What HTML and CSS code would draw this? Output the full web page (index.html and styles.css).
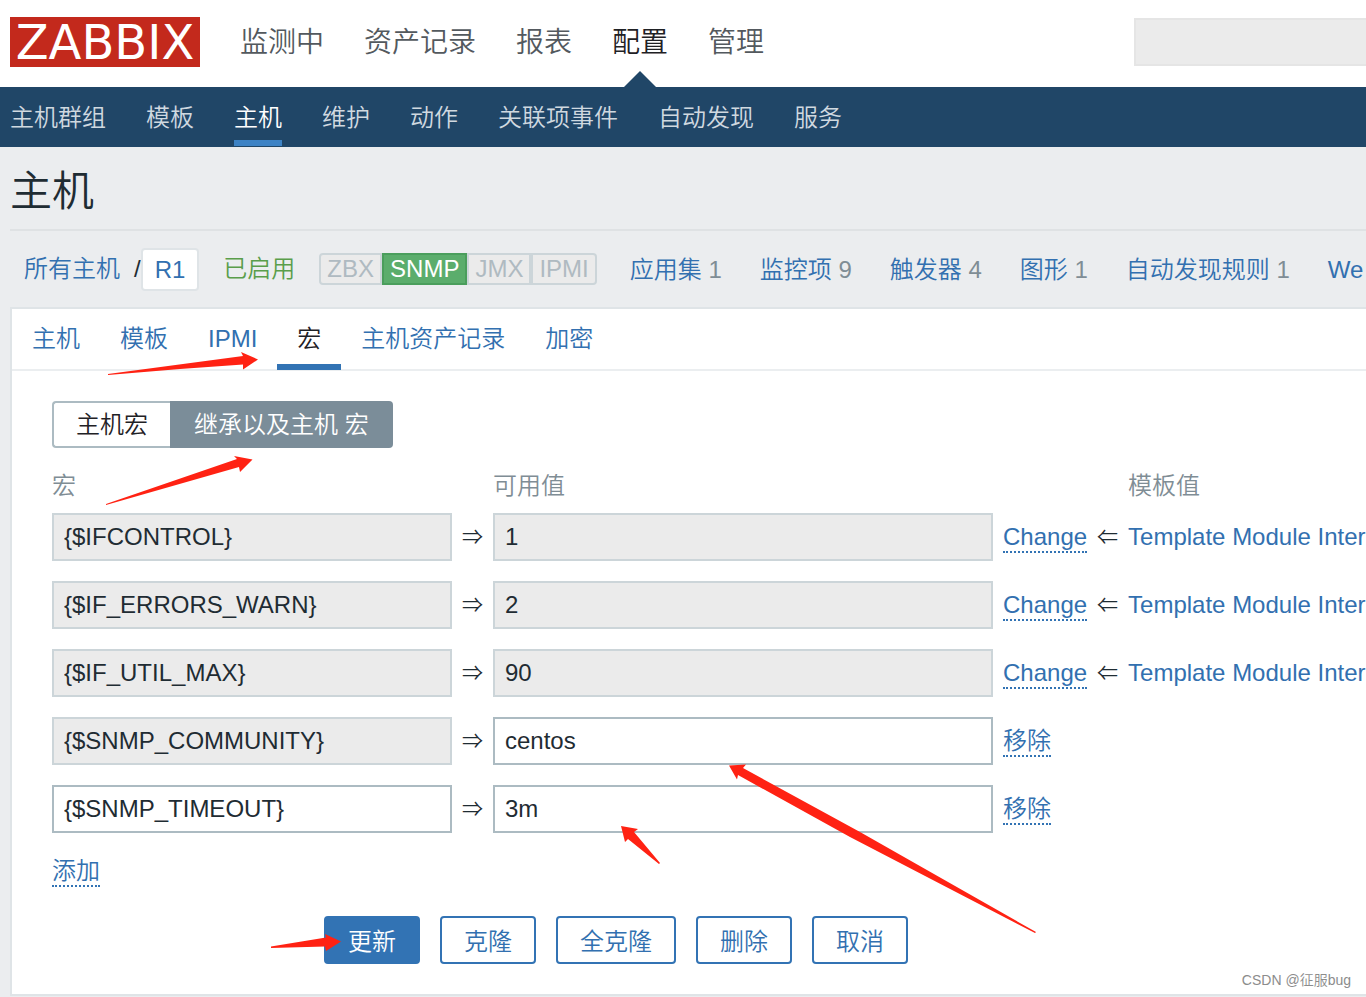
FILE: index.html
```html
<!DOCTYPE html>
<html lang="zh-CN">
<head>
<meta charset="utf-8">
<title>主机</title>
<link rel="stylesheet" href="styles.css">
</head>
<body>
<div class="page">
  <header class="top">
    <a class="logo" href="#">ZABBIX</a>
    <nav class="menu">
      <a href="#">监测中</a>
      <a href="#">资产记录</a>
      <a href="#">报表</a>
      <a class="active" href="#">配置</a>
      <a href="#">管理</a>
    </nav>
    <input class="search" type="text" aria-label="搜索">
  </header>
  <nav class="submenu">
    <a href="#">主机群组</a>
    <a href="#">模板</a>
    <a class="active" href="#">主机</a>
    <a href="#">维护</a>
    <a href="#">动作</a>
    <a href="#">关联项事件</a>
    <a href="#">自动发现</a>
    <a href="#">服务</a>
  </nav>
  <main class="content">
    <h1>主机</h1>
    <div class="crumbs">
      <a href="#">所有主机</a>
      <span class="slash">/</span>
      <a class="current" href="#">R1</a>
      <span class="enabled">已启用</span>
      <div class="agents">
        <span>ZBX</span><span class="on">SNMP</span><span>JMX</span><span>IPMI</span>
      </div>
      <ul class="counts">
        <li><a href="#">应用集</a> 1</li>
        <li><a href="#">监控项</a> 9</li>
        <li><a href="#">触发器</a> 4</li>
        <li><a href="#">图形</a> 1</li>
        <li><a href="#">自动发现规则</a> 1</li>
        <li><a href="#">We</a></li>
      </ul>
    </div>
    <form class="panel">
      <nav class="tabs">
        <a href="#">主机</a>
        <a href="#">模板</a>
        <a href="#">IPMI</a>
        <a class="active" href="#">宏</a>
        <a href="#">主机资产记录</a>
        <a href="#">加密</a>
      </nav>
      <div class="body">
        <div class="switch">
          <button type="button">主机宏</button><button class="selected" type="button">继承以及主机 宏</button>
        </div>
        <table class="macros">
          <thead>
            <tr><th>宏</th><th></th><th>可用值</th><th></th><th></th><th>模板值</th></tr>
          </thead>
          <tbody>
            <tr>
              <td><input class="name" type="text" value="{$IFCONTROL}" aria-label="宏" readonly></td>
              <td class="arrow">⇒</td>
              <td><input class="value" type="text" value="1" aria-label="可用值" readonly></td>
              <td><button class="link" type="button">Change</button></td>
              <td class="arrow">⇐</td>
              <td><a href="#">Template Module Inter</a></td>
            </tr>
            <tr>
              <td><input class="name" type="text" value="{$IF_ERRORS_WARN}" aria-label="宏" readonly></td>
              <td class="arrow">⇒</td>
              <td><input class="value" type="text" value="2" aria-label="可用值" readonly></td>
              <td><button class="link" type="button">Change</button></td>
              <td class="arrow">⇐</td>
              <td><a href="#">Template Module Inter</a></td>
            </tr>
            <tr>
              <td><input class="name" type="text" value="{$IF_UTIL_MAX}" aria-label="宏" readonly></td>
              <td class="arrow">⇒</td>
              <td><input class="value" type="text" value="90" aria-label="可用值" readonly></td>
              <td><button class="link" type="button">Change</button></td>
              <td class="arrow">⇐</td>
              <td><a href="#">Template Module Inter</a></td>
            </tr>
            <tr>
              <td><input class="name" type="text" value="{$SNMP_COMMUNITY}" aria-label="宏" readonly></td>
              <td class="arrow">⇒</td>
              <td><input class="value" type="text" value="centos" aria-label="可用值"></td>
              <td><button class="link" type="button">移除</button></td>
              <td></td>
              <td></td>
            </tr>
            <tr>
              <td><input class="name" type="text" value="{$SNMP_TIMEOUT}" aria-label="宏"></td>
              <td class="arrow">⇒</td>
              <td><input class="value" type="text" value="3m" aria-label="可用值"></td>
              <td><button class="link" type="button">移除</button></td>
              <td></td>
              <td></td>
            </tr>
          </tbody>
        </table>
        <button class="link" type="button">添加</button>
        <div class="actions">
          <button class="primary" type="submit">更新</button>
          <button type="button">克隆</button>
          <button type="button">全克隆</button>
          <button type="button">删除</button>
          <button type="button">取消</button>
        </div>
      </div>
    </form>
  </main>
  <svg class="marks" width="1366" height="997" viewBox="0 0 1366 997" aria-hidden="true">
    <path d="M108 374 L243 356 L241 352 L258 359.500 L243 369.500 L243 364.500 L180 369 L108 375Z"/>
    <path d="M106 504 L237 459 L234 456 L252.500 459.500 L240 472 L239 467 L106 505Z"/>
    <path d="M729 765.500 L746 764.500 L743 768 L860 832 L1036 932 L1035 933 L850 837 L738 775 L737 779.500Z"/>
    <path d="M621 826 L638 829 L634 832 L660 863 L659 864 L628 839 L625 842Z"/>
    <path d="M271 946.500 L326 937.500 L325 934 L341 941.500 L326 951 L325 946.500 L271 948Z"/>
  </svg>
  <div class="watermark">CSDN @征服bug</div>
</div>
</body>
</html>
```
FILE: styles.css
```css
* { box-sizing: border-box; }

body {
  margin: 0;
  background: #ebedef;
  color: #1f2c33;
  font-family: "Liberation Sans", "Noto Sans CJK SC", sans-serif;
  font-size: 24px;
  font-weight: 350;
  line-height: 36px;
}

a { color: #3270b0; text-decoration: none; }

button, input { font: inherit; color: inherit; }

.page {
  position: relative;
  overflow: hidden;
  padding-bottom: 1px;
  white-space: nowrap;
}

/* Header */
.top {
  display: flex;
  align-items: center;
  height: 87px;
  padding: 0 0 3px 10px;
  background: #fff;
}

.logo {
  flex: none;
  width: 190px;
  height: 50px;
  background: #c3291c;
  color: #fff;
  font-family: "DejaVu Sans", sans-serif;
  font-size: 48px;
  font-weight: 400;
  line-height: 50px;
  text-align: center;
}

.menu {
  display: flex;
  gap: 40px;
  margin-left: 40px;
  padding-top: 2px;
  font-size: 28px;
}

.menu a { position: relative; color: #53595e; }
.menu a.active { color: #1f2125; }

.menu a.active::after {
  content: "";
  position: absolute;
  top: 46px;
  left: 50%;
  margin-left: -16px;
  border: 16px solid transparent;
  border-top: 0;
  border-bottom-color: #204667;
}

.search {
  flex: none;
  width: 252px;
  height: 48px;
  margin: 0 -20px 0 auto;
  border: 2px solid #e5e5e5;
  background: #ebebeb;
}

.submenu {
  display: flex;
  gap: 40px;
  height: 60px;
  padding: 0 10px;
  background: #204667;
  line-height: 62px;
}

.submenu a { height: 59px; color: #d0d9e0; }
.submenu a.active { border-bottom: 6px solid #3d83c5; color: #fff; }

/* Host summary */
.content { padding-left: 10px; }

h1 {
  margin: 0;
  padding: 20px 0 12px;
  border-bottom: 2px solid #dfe2e4;
  font-size: 42px;
  font-weight: inherit;
  line-height: 50px;
}

.crumbs {
  display: flex;
  align-items: center;
  height: 76px;
  padding-left: 14px;
  line-height: 38px;
}

.slash { margin-left: 14px; }

.current {
  padding: 1px 12px 0;
  border: 2px solid #dfe4e7;
  border-radius: 4px;
  background: #fff;
}

.enabled { margin-left: 24px; color: #5a9e4b; }

.agents {
  display: flex;
  margin-left: 24px;
  line-height: 28px;
}

.agents span {
  padding: 0 6px;
  border: 2px solid #ccd5d9;
  background: #ebebeb;
  color: #afbac1;
}

.agents span:first-child { border-radius: 4px 0 0 4px; }
.agents span:last-child { border-radius: 0 4px 4px 0; }
.agents .on { border-color: #4a9e5c; background: #5bad6c; color: #fff; }

.counts {
  display: flex;
  gap: 38px;
  margin: 0 0 0 33px;
  padding: 2px 0 0;
  color: #7f8d95;
  list-style: none;
}

/* Form panel */
.panel {
  margin-right: -20px;
  border: 2px solid #dfe4e7;
  background: #fff;
}

.tabs {
  display: flex;
  height: 62px;
  border-bottom: 2px solid #ebeef0;
  line-height: 60px;
}

.tabs a { height: 61px; padding: 0 20px; }
.tabs a.active { border-bottom: 6px solid #3273b4; color: #1f2125; }

.body { padding: 30px 40px; }

.switch { display: flex; }

.switch button {
  height: 47px;
  padding: 0 22px;
  border: 2px solid #acbbc2;
  border-right: 0;
  border-radius: 4px 0 0 4px;
  background: #fff;
  color: #1f2125;
}

.switch .selected {
  padding: 0 24px;
  border: 0;
  border-radius: 0 4px 4px 0;
  background: #7b8d99;
  color: #fff;
}

.macros { margin: 21px 0 10px; border-spacing: 0; }

.macros th {
  height: 34px;
  padding: 0;
  color: #7f8d95;
  font-weight: inherit;
  line-height: 34px;
  text-align: left;
}

.macros td { height: 68px; padding: 0; }

.macros .arrow { padding: 0 10px; font-size: 21px; }

.macros input {
  display: block;
  height: 48px;
  padding: 0 10px;
  border: 2px solid #acbbc2;
  background: #fff;
}

.macros input:read-only { border-color: #ccd5d9; background: #ebebeb; }
.macros .name { width: 400px; }
.macros .value { width: 500px; margin-right: 10px; }

.link {
  padding: 0;
  border: 0;
  border-bottom: 2px dotted #3273b4;
  background: none;
  color: #3270b0;
  line-height: 28px;
}

.actions {
  display: flex;
  gap: 20px;
  margin: 27px 0 0 272px;
}

.actions button {
  height: 48px;
  padding: 3px 22px 0;
  border: 2px solid #3273b4;
  border-radius: 4px;
  background: #fff;
  color: #3270b0;
}

.actions .primary { background: #3273b4; color: #fff; }

/* Annotations */
.marks {
  position: absolute;
  top: 0;
  left: 0;
  fill: #ff2213;
  pointer-events: none;
}

.watermark {
  position: absolute;
  right: 15px;
  bottom: 8px;
  color: #8c8c8c;
  font-size: 14px;
  line-height: 18px;
}
```
